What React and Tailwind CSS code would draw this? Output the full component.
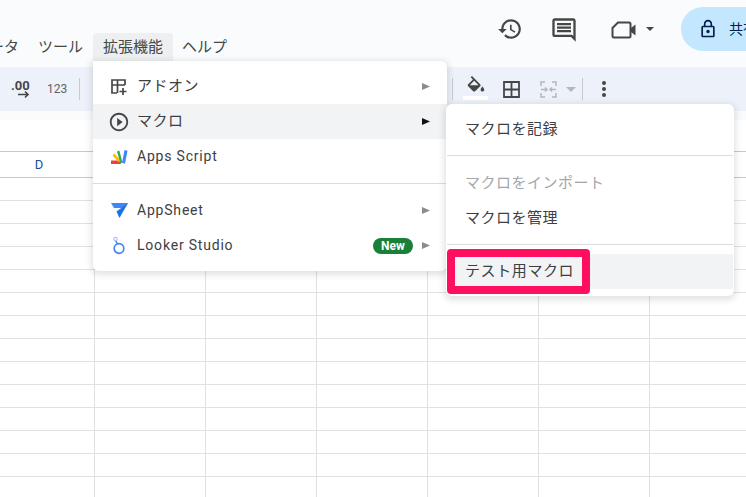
const G = ({ d, className = "", fill = "#444746", size = 24, vb = "0 0 24 24" }) => (
  <svg width={size} height={size} viewBox={vb} className={"shrink-0 " + className}><path d={d} fill={fill} /></svg>
);
const Arrow = ({ dark }) => (
  <svg width="8" height="9" viewBox="0 0 8 9" className="shrink-0"><path d="M0 1 L8 4.5 L0 8 Z" fill={dark ? "#111" : "#8a8c8f"} /></svg>
);
const Row = ({ icon, label, right, active, disabled, latin, nudge, indent = "pl-[16px]" }) => (
  <div className={"h-[35px] flex items-center pr-[17px] " + indent + (active ? " bg-[#f1f3f4]" : "") + (nudge ? " pt-[2px]" : "")}>
    {icon && <div className="w-[20px] mr-[8px] flex items-center justify-center">{icon}</div>}
    <span className={(latin ? "text-[14px] tracking-[0.8px] " : "text-[15px] tracking-[0.5px] ") + (disabled ? "text-[#a3a7ab]" : "text-[#3c4043]")}>{label}</span>
    <div className="ml-auto flex items-center gap-[9px]">{right}</div>
  </div>
);
const Sep = () => <div className="w-px h-[22px] bg-[#c7c9cc] shrink-0" />;

export default function App() {
  const font = { fontFamily: '"Roboto", "Noto Sans CJK JP", sans-serif' };
  return (
    <div className="relative w-[746px] h-[497px] overflow-hidden bg-white" style={font}>
      {/* header */}
      <div className="h-[120px] bg-[#f9fbfd] flex flex-col">
        <div className="h-[67px] relative flex">
          <div className="flex items-end h-[61px] -ml-[26px] text-[15px] text-[#444746]">
            <span className="h-[28px] leading-[28px] mr-[19px] shrink-0">データ</span>
            <span className="h-[28px] leading-[28px] mr-[10px] shrink-0">ツール</span>
            <span className="h-[28px] leading-[28px] w-[80px] text-center bg-[#edeff1] rounded-t-[4px] shrink-0">拡張機能</span>
            <span className="h-[28px] leading-[28px] ml-[9px] shrink-0">ヘルプ</span>
          </div>
          <div className="flex items-start absolute left-[497px] top-[7px] h-[44px] w-[300px]">
            <div className="flex items-center h-[44px]">
              <G size={26} d="M13 3c-4.97 0-9 4.03-9 9H1l3.89 3.89.07.14L9 12H6c0-3.87 3.13-7 7-7s7 3.13 7 7-3.13 7-7 7c-1.93 0-3.68-.79-4.94-2.06l-1.42 1.42C8.27 19.99 10.51 21 13 21c4.97 0 9-4.03 9-9s-4.03-9-9-9zm-1 5v5l4.28 2.54.72-1.21-3.5-2.08V8H12z" />
              <G size={28} className="ml-[27px] mt-[2px]" d="M21.99 4c0-1.1-.89-2-1.99-2H4c-1.1 0-2 .9-2 2v12c0 1.1.9 2 2 2h14l4 4-.01-18zM20 4v13.17L18.83 16H4V4h16zM6 12h12v2H6zm0-3h12v2H6zm0-3h12v2H6z" />
              <svg width="26" height="20" viewBox="0 0 26 20" className="ml-[33px] shrink-0 mt-[2px]">
                <path d="M7 2.5h11a1.5 1.5 0 0 1 1.5 1.5v12a1.5 1.5 0 0 1-1.5 1.5H3A1.5 1.5 0 0 1 1.5 16V8z" fill="none" stroke="#444746" strokeWidth="2" />
                <path d="M20 8l4.5-3.5v11L20 12z" fill="#444746" />
              </svg>
              <svg width="8" height="4" viewBox="0 0 8 4" className="ml-[9px] shrink-0"><path d="M0 0h8L4 4z" fill="#444746" /></svg>
            </div>
            <div className="ml-[27px] w-[200px] h-[44px] rounded-l-full bg-[#c2e7ff] flex items-center pl-[17px] shrink-0">
              <G size={20} fill="#041e49" d="M18 8h-1V6c0-2.76-2.24-5-5-5S7 3.24 7 6v2H6c-1.1 0-2 .9-2 2v10c0 1.1.9 2 2 2h12c1.1 0 2-.9 2-2V10c0-1.1-.9-2-2-2zM9 6c0-1.66 1.34-3 3-3s3 1.34 3 3v2H9V6zm9 14H6V10h12v10zm-6-3c1.1 0 2-.9 2-2s-.9-2-2-2-2 .9-2 2 .9 2 2 2z" />
              <span className="ml-[11px] text-[14px] text-[#041e49]">共有</span>
            </div>
          </div>
        </div>
        {/* toolbar */}
        <div className="h-[44px] bg-[#edf2fa] flex items-center">
          <svg width="22" height="20" viewBox="0 0 22 20" className="ml-[10px] shrink-0">
            <text x="1" y="11" fontSize="13" fontWeight="700" fill="#444746" fontFamily="Roboto">.00</text>
            <path d="M8 15.5h10M15 12.5l3 3-3 3" fill="none" stroke="#444746" strokeWidth="1.6" />
          </svg>
          <span className="ml-[15px] w-[22px] text-[12px] text-[#5f6368]">123</span>
          <div className="ml-[10px]"><Sep /></div>
          <div className="ml-[372px]"><Sep /></div>
          <div className="ml-[10px] w-[25px] relative flex justify-center h-[32px] shrink-0">
            <G size={22} className="mt-[3px]" d="M16.56 8.94L7.62 0 6.21 1.41l2.38 2.38-5.15 5.15c-.59.59-.59 1.54 0 2.12l5.5 5.5c.29.29.68.44 1.06.44s.77-.15 1.06-.44l5.5-5.5c.59-.58.59-1.53 0-2.12zM5.21 10L10 5.21 14.79 10H5.21zM19 11.5s-2 2.17-2 3.5c0 1.1.9 2 2 2s2-.9 2-2c0-1.33-2-3.5-2-3.5z" />
            <div className="absolute left-0 right-0 bottom-[5px] h-[4px] bg-white" />
          </div>
          <svg width="17" height="17" viewBox="0 0 17 17" className="ml-[15px] shrink-0">
            <path d="M1 1h15v15H1zM8.5 1v15M1 8.5h15" fill="none" stroke="#444746" strokeWidth="1.8" />
          </svg>
          <svg width="17" height="17" viewBox="0 0 17 17" className="ml-[20px] shrink-0">
            <path d="M5 1H1v4M5 16H1v-4M12 1h4v4M12 16h4v-4M1 8.5h6M5 6.5l2 2-2 2M16 8.5h-6M12 6.5l-2 2 2 2" fill="none" stroke="#b4b7ba" strokeWidth="1.5" />
          </svg>
          <svg width="10" height="5" viewBox="0 0 10 5" className="ml-[9px] shrink-0"><path d="M0 0h10L5 5z" fill="#b4b7ba" /></svg>
          <div className="ml-[6px]"><Sep /></div>
          <div className="ml-[19px] flex flex-col gap-[2.5px]">
            <div className="w-[3.5px] h-[3.5px] rounded-full bg-[#444746]" />
            <div className="w-[3.5px] h-[3.5px] rounded-full bg-[#444746]" />
            <div className="w-[3.5px] h-[3.5px] rounded-full bg-[#444746]" />
          </div>
        </div>
      </div>
      {/* formula bar */}
      <div className="h-[32px] bg-white border-b border-[#c7c7c7]" />
      {/* column headers */}
      <div className="h-[26px] border-b border-[#c7c7c7] flex">
        <div className="w-[78px] text-center text-[13px] leading-[25px] text-[#1a4f9c]">D</div>
      </div>
      {/* grid */}
      {Array.from({ length: 14 }).map((_, r) => (
        <div key={r} className="h-[23px] border-b border-[#e1e1e1] flex">
          <div className="w-[95px] shrink-0 border-r border-[#e1e1e1]" />
          {[0, 1, 2, 3, 4, 5].map((c) => (
            <div key={c} className="w-[111px] shrink-0 border-r border-[#e1e1e1]" />
          ))}
        </div>
      ))}

      {/* extension menu */}
      <div className="absolute left-[93px] top-[61px] w-[354px] bg-white rounded-b-[6px] rounded-tr-[6px] pt-[8px] pb-[8px] shadow-[0_2px_6px_2px_rgba(60,64,67,0.15)]">
        <Row label="アドオン" right={<Arrow />} icon={
          <svg width="18" height="18" viewBox="0 0 18 18"><path d="M7 15H2V2h13v5M2 7h13M7.5 2v13M13 10v7M9.5 13.5h7" fill="none" stroke="#444746" strokeWidth="1.7" /></svg>
        } />
        <Row active label="マクロ" right={<Arrow dark />} icon={
          <G size={22} d="M12 2C6.48 2 2 6.48 2 12s4.48 10 10 10 10-4.48 10-10S17.52 2 12 2zm0 18c-4.41 0-8-3.59-8-8s3.59-8 8-8 8 3.59 8 8-3.59 8-8 8zm-2-3.5 6-4.5-6-4.5v9z" />
        } />
        <Row latin label="Apps Script" icon={
          <svg width="19" height="16" viewBox="0 0 19 16">
            <path d="M1 11.5h9l1 3.5H1z" fill="#ea4335" />
            <path d="M2.5 6.5l2-2 6 7-1.5 2z" fill="#fbbc04" />
            <path d="M7 2.5l2.4-1 3 12-2 1z" fill="#34a853" />
            <path d="M12 14l2.5-13 3 .8L15 14.5z" fill="#4285f4" />
          </svg>
        } />
        <div className="h-px bg-[#dadce0] mt-[9px] mb-[9px]" />
        <Row latin label="AppSheet" right={<Arrow />} icon={
          <svg width="17" height="15" viewBox="0 0 17 15">
            <path d="M0 0h17l-3.5 5H3z" fill="#4285f4" />
            <path d="M17 0L8.5 15 5.5 8.5z" fill="#1a73e8" />
          </svg>
        } />
        <Row latin label="Looker Studio" right={
          <>
            <span className="w-[40px] h-[16px] rounded-full bg-[#188038] text-white text-[12px] font-bold leading-[16px] text-center">New</span>
            <Arrow />
          </>
        } icon={
          <svg width="14" height="19" viewBox="0 0 14 19">
            <circle cx="7" cy="12.5" r="4.8" fill="none" stroke="#4285f4" strokeWidth="1.7" />
            <path d="M5.5 8.2L3.8 5.2" stroke="#4285f4" strokeWidth="1.6" />
            <circle cx="3.5" cy="3" r="1.7" fill="none" stroke="#a8c7fa" strokeWidth="1.2" />
          </svg>
        } />
      </div>

      {/* macro submenu */}
      <div className="absolute left-[446px] top-[104px] w-[288px] bg-white rounded-[6px] py-[7px] shadow-[0_2px_6px_2px_rgba(60,64,67,0.15)]">
        <Row nudge label="マクロを記録" indent="pl-[19px]" />
        <div className="h-px bg-[#dadce0] mx-px mt-[9px] mb-[9px]" />
        <Row nudge label="マクロをインポート" disabled indent="pl-[19px]" />
        <Row nudge label="マクロを管理" indent="pl-[19px]" />
        <div className="h-px bg-[#dadce0] mx-px mt-[9px] mb-[9px]" />
        <div className="h-[35px] mx-px bg-[#f1f3f4] flex items-center pl-[18px]">
          <span className="text-[15px] tracking-[0.6px] text-[#3c4043]">テスト用マクロ</span>
        </div>
      </div>
      {/* annotation */}
      <div className="absolute left-[447px] top-[249px] w-[143px] h-[45px] border-[8px] border-[#ff0f5f] rounded-[4px]" />
    </div>
  );
}
